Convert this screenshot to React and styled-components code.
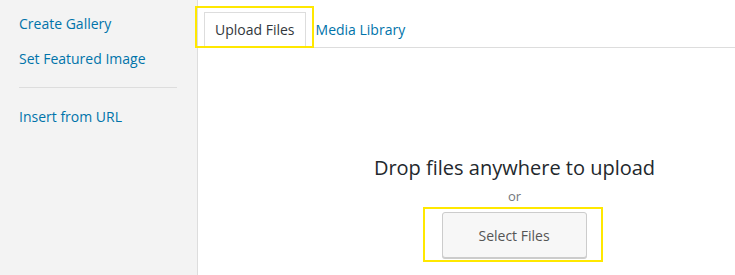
import styled, { createGlobalStyle } from "styled-components";

// styles
const GlobalStyle = createGlobalStyle`
  html, body {
    margin: 0;
    padding: 0;
    background: #fff;
    font-family: "Open Sans", "Liberation Sans", sans-serif;
  }
`;

const Frame = styled.div`
  width: 735px;
  height: 275px;
  display: flex;
  overflow: hidden;
`;

const Sidebar = styled.div`
  width: 198px;
  flex-shrink: 0;
  background-color: #f3f3f3;
  border-right: 1px solid #dddddd;
  padding: 12px 20px 0 19px;
  box-sizing: border-box;
`;

const MenuLink = styled.a`
  display: block;
  color: #0073aa;
  font-size: 14px;
  line-height: 22px;
  padding: 1px 0;
  margin-bottom: 11px;
  text-decoration: none;
  cursor: pointer;
`;

const Separator = styled.div`
  height: 1px;
  background-color: #dddddd;
  margin: 16px 0 17px;
`;

const Main = styled.div`
  flex: 1;
  min-width: 0;
  display: flex;
  flex-direction: column;
`;

const TabBar = styled.div`
  height: 48px;
  border-bottom: 1px solid #dddddd;
  display: flex;
  align-items: flex-end;
  box-sizing: border-box;
`;

const Highlight = styled.div`
  border: 2px solid #ffe800;
  padding: ${(p) => p.$pad};
  display: inline-flex;
  position: relative;
`;

const TabHighlight = styled(Highlight)`
  margin: 0 0 -1px -3px;
  align-items: flex-end;
`;

const ButtonHighlight = styled(Highlight)`
  margin-right: 4px;
`;

const Tab = styled.div`
  height: 34px;
  display: flex;
  align-items: center;
  padding: 0 ${(p) => (p.$active ? "10px" : "0")};
  margin: 0 ${(p) => (p.$active ? "6px 0 7px" : "0 1px 2px")};
  font-size: 14px;
  color: ${(p) => (p.$active ? "#32373c" : "#0073aa")};
  background: #fff;
  border: ${(p) => (p.$active ? "1px solid #dddddd" : "none")};
  border-bottom: none;
  box-sizing: border-box;
  cursor: pointer;
`;

const DropArea = styled.div`
  flex: 1;
  display: flex;
  flex-direction: column;
  align-items: center;
  padding: 105px 0 0 96px;
`;

const Title = styled.h2`
  margin: 0;
  font-size: 20px;
  font-weight: 400;
  line-height: 30px;
  color: #23282d;
`;

const Or = styled.p`
  margin: 5px 0 3px;
  font-size: 13px;
  line-height: 16px;
  color: #72777c;
`;

const Button = styled.button`
  width: 145px;
  height: 46px;
  background: #f7f7f7;
  border: 1px solid #cccccc;
  border-radius: 3px;
  box-shadow: 0 1px 0 #cccccc;
  color: #555555;
  font-family: inherit;
  font-size: 14px;
  cursor: pointer;
`;

const App = () => {
  return (
    <>
      <GlobalStyle />
      <Frame>
        <Sidebar>
          <MenuLink>Create Gallery</MenuLink>
          <MenuLink>Set Featured Image</MenuLink>
          <Separator />
          <MenuLink>Insert from URL</MenuLink>
        </Sidebar>
        <Main>
          <TabBar>
            <TabHighlight $pad="4px 0 0 0">
              <Tab $active>Upload Files</Tab>
            </TabHighlight>
            <Tab>Media Library</Tab>
          </TabBar>
          <DropArea>
            <Title>Drop files anywhere to upload</Title>
            <Or>or</Or>
            <ButtonHighlight $pad="3px 14px 2px 17px">
              <Button>Select Files</Button>
            </ButtonHighlight>
          </DropArea>
        </Main>
      </Frame>
    </>
  );
};
export default App;
